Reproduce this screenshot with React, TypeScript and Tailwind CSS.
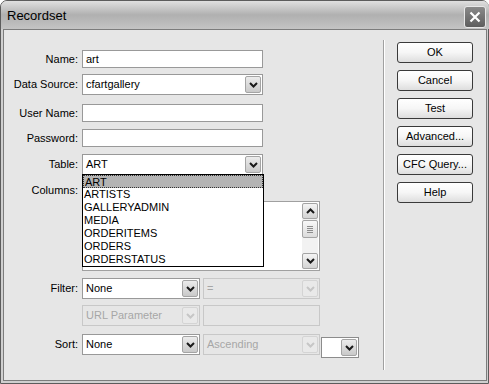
import React from "react";

const Chevron = ({ disabled, up }: { disabled?: boolean; up?: boolean }) => (
  <svg
    width="9"
    height="6"
    viewBox="0 0 9 6"
    className={disabled ? "text-[#c6c6c6]" : "text-[#1a1a1a]"}
  >
    <path
      d={up ? "M1 5 L4.5 1.5 L8 5" : "M1 1 L4.5 4.5 L8 1"}
      fill="none"
      stroke="currentColor"
      strokeWidth="2"
    />
  </svg>
);

const ArrowBtn = ({ disabled }: { disabled?: boolean }) => (
  <div
    className={`m-px flex w-[16px] items-center justify-center rounded-[2px] border ${
      disabled
        ? "border-[#d4d4d4] bg-[#e9e9e9]"
        : "border-[#a4a4a4] bg-gradient-to-b from-[#ececec] to-[#c9c9c9]"
    }`}
  >
    <Chevron disabled={disabled} />
  </div>
);

interface SelectProps {
  w: string;
  value?: string;
  disabled?: boolean;
}

const Select = ({ w, value, disabled }: SelectProps) => (
  <div
    className={`flex h-[21px] border ${w} ${
      disabled
        ? "border-[#c8c8c8] bg-[#e6e6e6] text-[#a6a6a6]"
        : "border-[#999999] bg-white text-black"
    }`}
  >
    <div className="flex flex-1 items-center overflow-hidden whitespace-nowrap px-[3px]">
      {value}
    </div>
    <ArrowBtn disabled={disabled} />
  </div>
);

const Input = ({ value }: { value?: string }) => (
  <div className="flex h-[18px] w-[181px] items-center border border-[#999999] bg-white px-[3px]">
    {value}
  </div>
);

const Label = ({ text }: { text?: string }) => (
  <div className="flex h-full w-[78px] shrink-0 items-center justify-end whitespace-nowrap pr-[4px]">
    {text}
  </div>
);

const tables = [
  "ART",
  "ARTISTS",
  "GALLERYADMIN",
  "MEDIA",
  "ORDERITEMS",
  "ORDERS",
  "ORDERSTATUS",
];

const buttons = ["OK", "Cancel", "Test", "Advanced...", "CFC Query...", "Help"];

export default function App() {
  return (
    <div
      className="h-[384px] w-[489px] overflow-hidden bg-white text-[11px] text-black"
      style={{ fontFamily: '"Liberation Sans", Arial, sans-serif' }}
    >
      <div className="flex h-[384px] w-[489px] flex-col rounded-t-[7px] border border-[#5c5c5c] bg-[#cfcfcf] pb-[2px] pl-[2px] pr-[1px]">
        {/* Title bar */}
        <div className="-mx-[2px] flex h-[28px] shrink-0 items-start justify-between rounded-t-[6px] bg-gradient-to-b from-[#e0e0e0] via-[#b0b0b0] to-[#c4c4c4] pl-[6px] pr-[3px]">
          <div className="pt-[7px] text-[13px] leading-[16px]">Recordset</div>
          <div className="mt-[5px] flex h-[22px] w-[22px] items-center justify-center rounded-[3px] border border-[#e8e8e8] bg-gradient-to-b from-[#8a8a8a] to-[#5e5e5e]">
            <svg width="12" height="12" viewBox="0 0 12 12">
              <path
                d="M1.5 1.5 L10.5 10.5 M10.5 1.5 L1.5 10.5"
                stroke="white"
                strokeWidth="2.2"
                fill="none"
              />
            </svg>
          </div>
        </div>

        {/* Body */}
        <div className="flex flex-1 border border-[#7c7c7c] bg-[#e6e6e6]">
          {/* Form */}
          <div className="flex w-[379px] shrink-0 flex-col pt-[20px]">
            <div className="flex h-[18px] items-center">
              <Label text="Name:" />
              <Input value="art" />
            </div>
            <div className="mt-[6px] flex h-[21px] items-center">
              <Label text="Data Source:" />
              <Select w="w-[181px]" value="cfartgallery" />
            </div>
            <div className="mt-[9px] flex h-[18px] items-center">
              <Label text="User Name:" />
              <Input />
            </div>
            <div className="mt-[7px] flex h-[18px] items-center">
              <Label text="Password:" />
              <Input />
            </div>
            <div className="relative z-10 mt-[7px] flex h-[21px] items-center">
              <Label text="Table:" />
              <div className="relative">
                <Select w="w-[181px]" value="ART" />
                <div className="absolute left-0 top-[20px] w-[182px] border border-black bg-white">
                  {tables.map((t, i) => (
                    <div
                      key={t}
                      className={`h-[13px] px-[1px] leading-[13px] ${
                        i === 0
                          ? "border border-dotted border-[#333] bg-[#b4b4b4] leading-[12px]"
                          : ""
                      }`}
                    >
                      {t}
                    </div>
                  ))}
                </div>
              </div>
            </div>
            <div className="mt-[9px] flex items-start">
              <div className="w-[78px] shrink-0 pr-[4px] text-right leading-[13px]">
                Columns:
              </div>
              <div className="mt-[17px] flex h-[70px] w-[238px] border border-[#a0a0a0] bg-white p-px">
                <div className="flex-1" />
                <div className="flex w-[16px] flex-col bg-[#f2f2f2]">
                  <div className="flex h-[16px] items-center justify-center rounded-[2px] border border-[#a4a4a4] bg-gradient-to-b from-[#f4f4f4] to-[#d4d4d4]">
                    <Chevron up />
                  </div>
                  <div className="mt-px flex h-[18px] flex-col items-center justify-center gap-px rounded-[2px] border border-[#a4a4a4] bg-gradient-to-b from-[#f8f8f8] to-[#dcdcdc]">
                    <div className="h-px w-[6px] bg-[#8c8c8c]" />
                    <div className="h-px w-[6px] bg-[#8c8c8c]" />
                    <div className="h-px w-[6px] bg-[#8c8c8c]" />
                    <div className="h-px w-[6px] bg-[#8c8c8c]" />
                  </div>
                  <div className="flex-1" />
                  <div className="flex h-[16px] items-center justify-center rounded-[2px] border border-[#a4a4a4] bg-gradient-to-b from-[#f4f4f4] to-[#d4d4d4]">
                    <Chevron />
                  </div>
                </div>
              </div>
            </div>
            <div className="mt-[7px] flex h-[21px] items-center">
              <Label text="Filter:" />
              <Select w="w-[118px]" value="None" />
              <div className="ml-[3px]">
                <Select w="w-[117px]" value="=" disabled />
              </div>
            </div>
            <div className="mt-[6px] flex h-[21px] items-center">
              <Label />
              <Select w="w-[118px]" value="URL Parameter" disabled />
              <div className="ml-[3px] h-[21px] w-[117px] border border-[#c8c8c8] bg-[#e6e6e6]" />
            </div>
            <div className="mt-[8px] flex h-[21px] items-start">
              <Label text="Sort:" />
              <Select w="w-[118px]" value="None" />
              <div className="ml-[3px]">
                <Select w="w-[117px]" value="Ascending" disabled />
              </div>
              <div className="ml-px mt-[3px] flex h-[21px] w-[38px] shrink-0 border border-[#8c8c8c] bg-white">
                <div className="flex-1" />
                <ArrowBtn />
              </div>
            </div>
          </div>

          {/* Divider */}
          <div className="mt-[10px] flex h-[330px] w-[2px] shrink-0">
            <div className="w-px bg-[#a0a0a0]" />
            <div className="w-px bg-white" />
          </div>

          {/* Buttons */}
          <div className="ml-[12px] flex w-[76px] flex-col gap-[7px] pt-[12px]">
            {buttons.map((b) => (
              <div
                key={b}
                className="flex h-[21px] items-center justify-center whitespace-nowrap rounded-[3px] border border-[#3a3a3a] bg-gradient-to-b from-white via-[#f6f6f6] to-[#dedede]"
              >
                {b}
              </div>
            ))}
          </div>
        </div>
      </div>
    </div>
  );
}
